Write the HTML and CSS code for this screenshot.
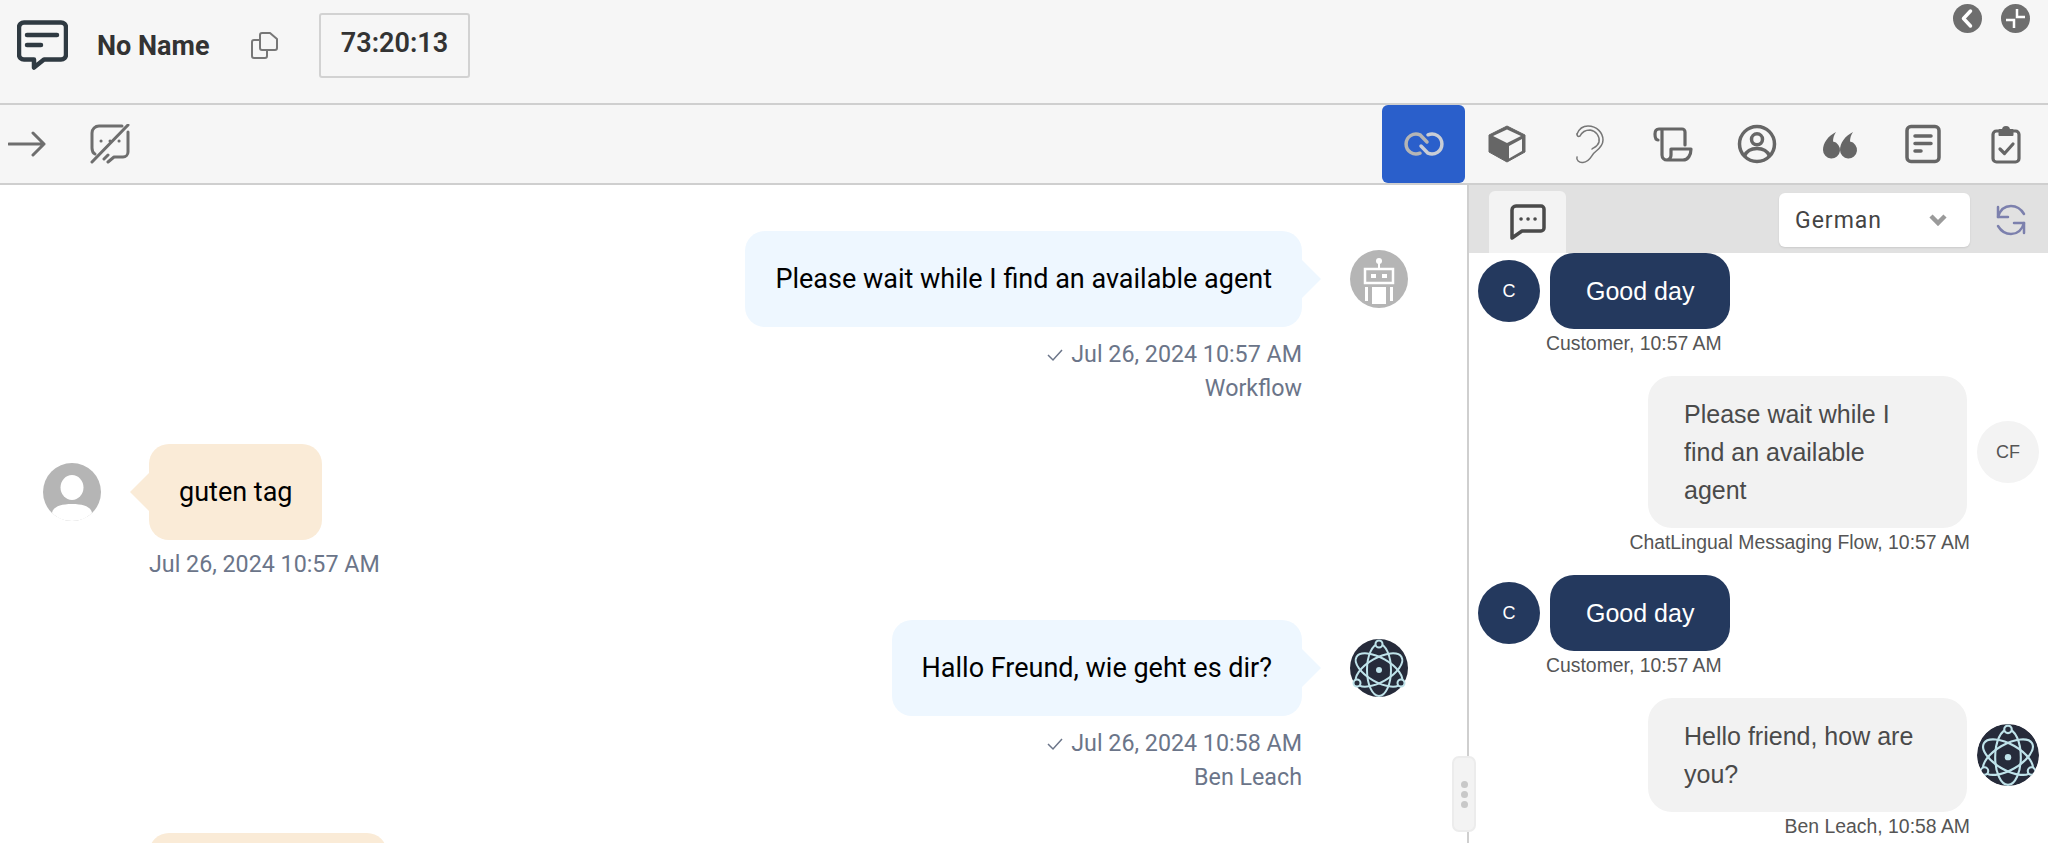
FILE: index.html
```html
<!DOCTYPE html>
<html lang="en">
<head>
    <meta charset="UTF-8">
    <title>Conversation</title>
    <link rel="stylesheet" href="styles.css">
</head>
<body>
    <svg class="sprite" xmlns="http://www.w3.org/2000/svg">
        <symbol id="atom" viewBox="0 0 58 58">
            <circle cx="29" cy="29" r="29" fill="#262b3a"/>
            <g fill="none" stroke="#bfe3ea" stroke-width="2">
                <ellipse cx="29" cy="31" rx="26" ry="12" transform="rotate(90 29 31)"/>
                <ellipse cx="29" cy="31" rx="26" ry="12" transform="rotate(30 29 31)"/>
                <ellipse cx="29" cy="31" rx="26" ry="12" transform="rotate(-30 29 31)"/>
            </g>
            <circle cx="29" cy="31" r="3" fill="#bfe3ea"/>
            <g fill="#262b3a" stroke="#bfe3ea" stroke-width="2">
                <circle cx="29" cy="5" r="3.5"/>
                <circle cx="7" cy="44" r="3.5"/>
                <circle cx="51" cy="44" r="3.5"/>
            </g>
        </symbol>
    </svg>

    <div class="app">
        <header class="header">
            <svg class="icon-chat" viewBox="0 0 51 51" fill="none" stroke="#2f3a42" stroke-width="4.5" stroke-linecap="round" stroke-linejoin="round">
                <path d="M7 2.5h37a5 5 0 0 1 5 5v27a5 5 0 0 1-5 5H27l-10 8v-8H7a5 5 0 0 1-5-5v-27a5 5 0 0 1 5-5z"/>
                <path d="M10 15h30M10 25h14"/>
            </svg>
            <span class="customer-name">No Name</span>
            <svg class="icon-copy" viewBox="0 0 27 27" fill="none" stroke="#777" stroke-width="2" stroke-linejoin="round">
                <path d="M11 1h8l7 6v9a2 2 0 0 1-2 2H11a2 2 0 0 1-2-2V3a2 2 0 0 1 2-2z"/>
                <path d="M9 8H3a2 2 0 0 0-2 2v14a2 2 0 0 0 2 2h11a2 2 0 0 0 2-2v-6"/>
            </svg>
            <div class="timer">73:20:13</div>
            <div class="window-btns">
                <svg class="round-btn" viewBox="0 0 29 29">
                    <circle cx="14.5" cy="14.5" r="14.5" fill="#6e6e6e"/>
                    <path d="M17.5 7l-7 7.5 7 7.5" fill="none" stroke="#fff" stroke-width="3.5" stroke-linecap="round" stroke-linejoin="round"/>
                </svg>
                <svg class="round-btn" viewBox="0 0 29 29">
                    <circle cx="14.5" cy="14.5" r="14.5" fill="#6e6e6e"/>
                    <path d="M16 5v8h8M13 24v-8H5" fill="none" stroke="#fff" stroke-width="2.5"/>
                </svg>
            </div>
        </header>

        <nav class="toolbar">
            <svg class="icon-arrow" viewBox="0 0 38 26" fill="none" stroke="#6e6e6e" stroke-width="3" stroke-linecap="round" stroke-linejoin="round">
                <path d="M1 13h35M25 2l11 11-11 11"/>
            </svg>
            <svg class="icon-chat-off" viewBox="0 0 40 40" fill="none" stroke="#6e6e6e" stroke-width="3" stroke-linecap="round" stroke-linejoin="round">
                <path d="M32 2H9a7 7 0 0 0-7 7v15c0 3 1 5 3 6"/>
                <path d="M38 8v20a5 5 0 0 1-5 5H24l-6 5"/>
                <path d="M38 1L2 38M18 31l-4 4"/>
                <path d="M11 17h.1M20 17h.1M29 17h.1"/>
            </svg>
            <div class="tabs">
                <div class="tab tab-active">
                    <svg viewBox="0 0 38 38" fill="none" stroke-width="3.5" stroke-linecap="round">
                        <path d="M15 28.2A10 10 0 1 1 15 9.8L22 17" stroke="#b5b5b5"/>
                        <path d="M23 9.8A10 10 0 1 1 23 28.2L16 21" stroke="#c9cdd6"/>
                    </svg>
                </div>
                <div class="tab">
                    <svg viewBox="0 0 38 38">
                        <path d="M19 1l18 9v17l-18 10-18-10V10z" fill="#666" stroke="#666" stroke-linejoin="round"/>
                        <path d="M19 4.5L33 11l-14 7-14-7zM21 21l13-7v12l-13 7.5z" fill="#f5f5f5"/>
                    </svg>
                </div>
                <div class="tab">
                    <svg viewBox="0 0 38 38" fill="none" stroke="#777" stroke-width="1.5" stroke-linecap="round">
                        <path d="M6 9C8 4 12 1 17 1c9 0 15 7 15 14 0 7-6 10-9 13-3 3-4 9-11 9.5-4 .5-7-2.5-6-5.5"/>
                        <path d="M6 9c0 2 1 3 3 2 2-4 6-6 10-6 6 1 10 6 9 12-1 4-4 5-7 7"/>
                    </svg>
                </div>
                <div class="tab">
                    <svg viewBox="0 0 38 38" fill="none" stroke="#666" stroke-width="3.2" stroke-linecap="round" stroke-linejoin="round">
                        <path d="M4 15c-3 0-3-3-3-6s1-5 4-5h23a3 3 0 0 1 3 3v13"/>
                        <path d="M8 5v25a5 5 0 0 0 5 5h16c5 0 8-5 8-11H17v6a5 5 0 0 1-4 5"/>
                    </svg>
                </div>
                <div class="tab">
                    <svg viewBox="0 0 38 38" fill="none" stroke="#666" stroke-width="3.5">
                        <circle cx="19" cy="19" r="17.5"/>
                        <circle cx="19" cy="14.3" r="5.5"/>
                        <path d="M6.5 31C9 25 14 23.5 19 23.5S29 25 31.500 31"/>
                    </svg>
                </div>
                <div class="tab">
                    <svg viewBox="0 0 38 38" fill="#666">
                        <path d="M15 7C7 11 2 18 2 25a8.5 8.5 0 1 0 10-8.4C12 13 13 10 15 7z"/>
                        <path d="M32 7c-8 4-13 11-13 18a8.5 8.5 0 1 0 10-8.4C29 13 30 10 32 7z"/>
                    </svg>
                </div>
                <div class="tab">
                    <svg viewBox="0 0 38 38" fill="none" stroke="#666" stroke-width="3.5" stroke-linecap="round">
                        <rect x="3" y="1.5" width="32" height="35" rx="4"/>
                        <path d="M11 11h16M11 18.5h16M11 26h6"/>
                    </svg>
                </div>
                <div class="tab">
                    <svg viewBox="0 0 38 38" fill="none" stroke="#666" stroke-width="3.2" stroke-linecap="round" stroke-linejoin="round">
                        <rect x="6" y="6" width="26" height="31" rx="3.5"/>
                        <path d="M12.5 5H16a3 3 0 0 1 6 0h3.5v5h-13z" fill="#666" stroke-width="2"/>
                        <path d="M13 24l4.5 4.5L26 19"/>
                    </svg>
                </div>
            </div>
        </nav>

        <main class="workspace">
            <section class="chat">
                <div class="msg msg-agent">
                    <div class="msg-row">
                        <div class="bubble">Please wait while I find an available agent</div>
                        <svg class="avatar" viewBox="0 0 58 58">
                            <circle cx="29" cy="29" r="29" fill="#b5b5b5"/>
                            <circle cx="29" cy="11" r="3" fill="#fff"/>
                            <path d="M29 13v5" stroke="#fff" stroke-width="2"/>
                            <rect x="15" y="19" width="28" height="14" fill="none" stroke="#fff" stroke-width="2.5"/>
                            <path d="M21 24h5v4h-5zM32 24h5v4h-5z" fill="#fff"/>
                            <path d="M15 37h3v14h-3zM40 37h3v14h-3zM22 37h14v17h-14z" fill="#fff"/>
                        </svg>
                    </div>
                    <div class="msg-meta">
                        <svg class="tick" viewBox="0 0 18 14" fill="none" stroke="#6b7589" stroke-width="1.5"><path d="M2 7l5 5L16 2"/></svg>Jul 26, 2024 10:57 AM
                    </div>
                    <div class="msg-meta">Workflow</div>
                </div>

                <div class="msg msg-user">
                    <div class="msg-row">
                        <svg class="avatar" viewBox="0 0 58 58">
                            <circle cx="29" cy="29" r="29" fill="#b5b5b5"/>
                            <ellipse cx="29" cy="24.5" rx="11.5" ry="12.5" fill="#fff"/>
                            <path d="M9 50c1-6 8-9 20-9s19 3 20 9c-5 5-12 8-20 8s-15-3-20-8z" fill="#fff"/>
                        </svg>
                        <div class="bubble">guten tag</div>
                    </div>
                    <div class="msg-meta">Jul 26, 2024 10:57 AM</div>
                </div>

                <div class="msg msg-agent">
                    <div class="msg-row">
                        <div class="bubble">Hallo Freund, wie geht es dir?</div>
                        <svg class="avatar"><use href="#atom"/></svg>
                    </div>
                    <div class="msg-meta">
                        <svg class="tick" viewBox="0 0 18 14" fill="none" stroke="#6b7589" stroke-width="1.5"><path d="M2 7l5 5L16 2"/></svg>Jul 26, 2024 10:58 AM
                    </div>
                    <div class="msg-meta">Ben Leach</div>
                </div>

                <div class="msg msg-user">
                    <div class="msg-row">
                        <div class="avatar"></div>
                        <div class="bubble bubble-cut"></div>
                    </div>
                </div>
            </section>

            <div class="resize-handle"><span></span><span></span><span></span></div>

            <aside class="side">
                <div class="side-bar">
                    <div class="side-tab">
                        <svg viewBox="0 0 36 36" fill="none" stroke="#4a4a4a" stroke-width="3.5" stroke-linecap="round" stroke-linejoin="round">
                            <path d="M6 2h25a3 3 0 0 1 3 3v19a3 3 0 0 1-3 3H12l-10 7V6a4 4 0 0 1 4-4z"/>
                            <path d="M11 15h.1M18 15h.1M25 15h.1"/>
                        </svg>
                    </div>
                    <div class="lang-select">
                        <span>German</span>
                        <svg viewBox="0 0 18 12" fill="none" stroke="#9a9a9a" stroke-width="4.5"><path d="M2 2l7 7 7-7"/></svg>
                    </div>
                    <svg class="icon-refresh" viewBox="0 0 32 32" fill="none" stroke="#7c80ad" stroke-width="2.5" stroke-linecap="round" stroke-linejoin="round">
                        <path d="M3 13C5 6 10 2 16 2c6 0 10 3 13 8"/>
                        <path d="M3 3v10h10"/>
                        <path d="M29 19c-2 7-7 11-13 11-6 0-10-3-13-8"/>
                        <path d="M29 29V19H19"/>
                    </svg>
                </div>
                <div class="thread">
                    <div class="note note-in">
                        <div class="note-row">
                            <div class="note-avatar note-avatar-dark">C</div>
                            <div class="note-bubble">Good day</div>
                        </div>
                        <div class="note-meta">Customer, 10:57 AM</div>
                    </div>
                    <div class="note note-out">
                        <div class="note-row">
                            <div class="note-bubble">Please wait while I<br>find an available<br>agent</div>
                            <div class="note-avatar">CF</div>
                        </div>
                        <div class="note-meta">ChatLingual Messaging Flow, 10:57 AM</div>
                    </div>
                    <div class="note note-in">
                        <div class="note-row">
                            <div class="note-avatar note-avatar-dark">C</div>
                            <div class="note-bubble">Good day</div>
                        </div>
                        <div class="note-meta">Customer, 10:57 AM</div>
                    </div>
                    <div class="note note-out">
                        <div class="note-row">
                            <div class="note-bubble">Hello friend, how are<br>you?</div>
                            <svg class="note-avatar"><use href="#atom"/></svg>
                        </div>
                        <div class="note-meta">Ben Leach, 10:58 AM</div>
                    </div>
                </div>
            </aside>
        </main>
    </div>
</body>
</html>
```

FILE: styles.css
```css
html, body {
    height: 100%;
}

body {
    margin: 0;
    background: #fff;
    font-family: Roboto, Arial, sans-serif;
    overflow: hidden;
}

.sprite {
    display: none;
}

.app {
    display: flex;
    flex-direction: column;
    height: 843px;
    overflow: hidden;
}

/* top bar */
.header {
    display: flex;
    align-items: center;
    flex-shrink: 0;
    height: 105px;
    box-sizing: border-box;
    padding: 0 18px 12px 17px;
    background: #f6f6f6;
    border-bottom: 2px solid #cfcfcf;
}

.icon-chat {
    width: 51px;
    height: 51px;
    margin-right: 29px;
}

.customer-name {
    font-size: 27px;
    font-weight: 700;
    color: #333;
    width: 154px;
}

.icon-copy {
    width: 27px;
    height: 27px;
    margin-right: 41px;
}

.timer {
    width: 151px;
    height: 65px;
    box-sizing: border-box;
    border: 2px solid #d2d2d2;
    border-radius: 3px;
    font-size: 27px;
    font-weight: 600;
    line-height: 57px;
    text-align: center;
    color: #333;
}

.window-btns {
    display: flex;
    gap: 19px;
    margin-left: auto;
    align-self: flex-start;
    padding-top: 4px;
}

.round-btn {
    width: 29px;
    height: 29px;
}

/* second bar */
.toolbar {
    display: flex;
    align-items: center;
    flex-shrink: 0;
    height: 80px;
    box-sizing: border-box;
    background: #f6f6f6;
    border-bottom: 2px solid #cfcfcf;
    padding-left: 8px;
}

.icon-arrow {
    width: 38px;
    height: 26px;
    margin-right: 44px;
}

.icon-chat-off {
    width: 40px;
    height: 40px;
}

.tabs {
    display: flex;
    margin-left: auto;
    align-self: stretch;
}

.tab {
    display: flex;
    justify-content: center;
    align-items: center;
    width: 83.25px;
}

.tab svg {
    width: 38px;
    height: 38px;
    overflow: visible;
}

.tab-active {
    background: #2a5fcb;
    border-radius: 6px;
}

/* main area */
.workspace {
    display: flex;
    flex: 1;
    min-height: 0;
    position: relative;
}

.chat {
    width: 1469px;
    flex-shrink: 0;
    box-sizing: border-box;
    padding: 46px 59px 0 43px;
    border-right: 2px solid #cfcfcf;
}

.msg {
    margin-bottom: 39px;
}

.msg-row {
    display: flex;
    align-items: center;
    gap: 48px;
}

.msg-agent .msg-row {
    justify-content: flex-end;
}

.msg-agent .msg-meta {
    text-align: right;
    margin-right: 106px;
}

.msg-user .msg-meta {
    margin-left: 106px;
}

.avatar {
    display: block;
    width: 58px;
    height: 58px;
    flex-shrink: 0;
}

.bubble {
    position: relative;
    padding: 30px;
    border-radius: 20px;
    font-size: 27px;
    line-height: 36px;
    color: #000;
}

.bubble::after {
    content: "";
    position: absolute;
    top: 50%;
    width: 0;
    height: 0;
    margin-top: -19px;
    border-top: 19px solid transparent;
    border-bottom: 19px solid transparent;
}

.msg-agent .bubble {
    background: #eef7ff;
}

.msg-agent .bubble::after {
    left: 100%;
    border-left: 19px solid #eef7ff;
}

.msg-user .bubble {
    background: #faebd7;
}

.msg-user .bubble::after {
    right: 100%;
    border-right: 19px solid #faebd7;
}

.bubble-cut {
    width: 178px;
    height: 36px;
}

.msg-meta {
    font-size: 23.25px;
    line-height: 34px;
    color: #6b7589;
}

.msg-row + .msg-meta {
    margin-top: 10px;
}

.msg-user .msg-row + .msg-meta {
    margin-top: 7px;
}

.tick {
    width: 18px;
    height: 14px;
    margin-right: 7px;
}

/* splitter grip, sits over the panel border */
.resize-handle {
    position: absolute;
    left: 1452px;
    top: 571px;
    width: 24px;
    height: 76px;
    box-sizing: border-box;
    display: flex;
    flex-direction: column;
    align-items: center;
    justify-content: center;
    gap: 3px;
    background: #f3f3f3;
    border: 2px solid #ececec;
    border-radius: 7px;
}

.resize-handle span {
    width: 7px;
    height: 7px;
    border-radius: 50%;
    background: #c8c8c8;
}

/* right panel */
.side {
    flex: 1;
    min-width: 0;
    font-family: "Liberation Sans", Arial, sans-serif;
}

.side-bar {
    display: flex;
    align-items: flex-end;
    height: 68px;
    background: #e1e1e1;
    padding-left: 20px;
}

.side-tab {
    display: flex;
    justify-content: center;
    align-items: center;
    width: 77px;
    height: 62px;
    background: #f3f3f3;
    border-radius: 6px 6px 0 0;
}

.side-tab svg {
    width: 36px;
    height: 36px;
}

.lang-select {
    display: flex;
    justify-content: space-between;
    align-items: center;
    width: 191px;
    height: 54px;
    box-sizing: border-box;
    margin: 0 0 6px 213px;
    padding: 0 23px 0 16px;
    background: #fff;
    border-radius: 6px;
    box-shadow: 0 1px 2px rgba(0,0,0,0.1);
    font-family: Roboto, Arial, sans-serif;
    font-size: 23px;
    letter-spacing: 1px;
    color: #444;
}

.lang-select svg {
    width: 18px;
    height: 12px;
}

.icon-refresh {
    width: 32px;
    height: 32px;
    margin: 0 0 17px 25px;
}

.thread {
    padding: 0 9px;
}

.note {
    margin-bottom: 22px;
}

.note-row {
    display: flex;
    align-items: center;
    gap: 10px;
}

.note-out .note-row {
    justify-content: flex-end;
}

.note-avatar {
    display: flex;
    justify-content: center;
    align-items: center;
    width: 62px;
    height: 62px;
    flex-shrink: 0;
    border-radius: 50%;
    background: #f3f3f3;
    font-size: 18px;
    color: #555;
}

.note-avatar-dark {
    background: #24395e;
    color: #fff;
}

.note-bubble {
    padding: 19px 36px;
    border-radius: 24px;
    font-size: 25px;
    line-height: 38px;
}

.note-in .note-bubble {
    background: #24395e;
    color: #fff;
}

.note-out .note-bubble {
    width: 319px;
    box-sizing: border-box;
    background: #f2f2f2;
    color: #4a4a4a;
}

.note-meta {
    margin-top: 3px;
    font-size: 19.4px;
    line-height: 22px;
    color: #555;
}

.note-in .note-meta {
    margin-left: 68px;
}

.note-out .note-meta {
    text-align: right;
    margin-right: 69px;
}
```
